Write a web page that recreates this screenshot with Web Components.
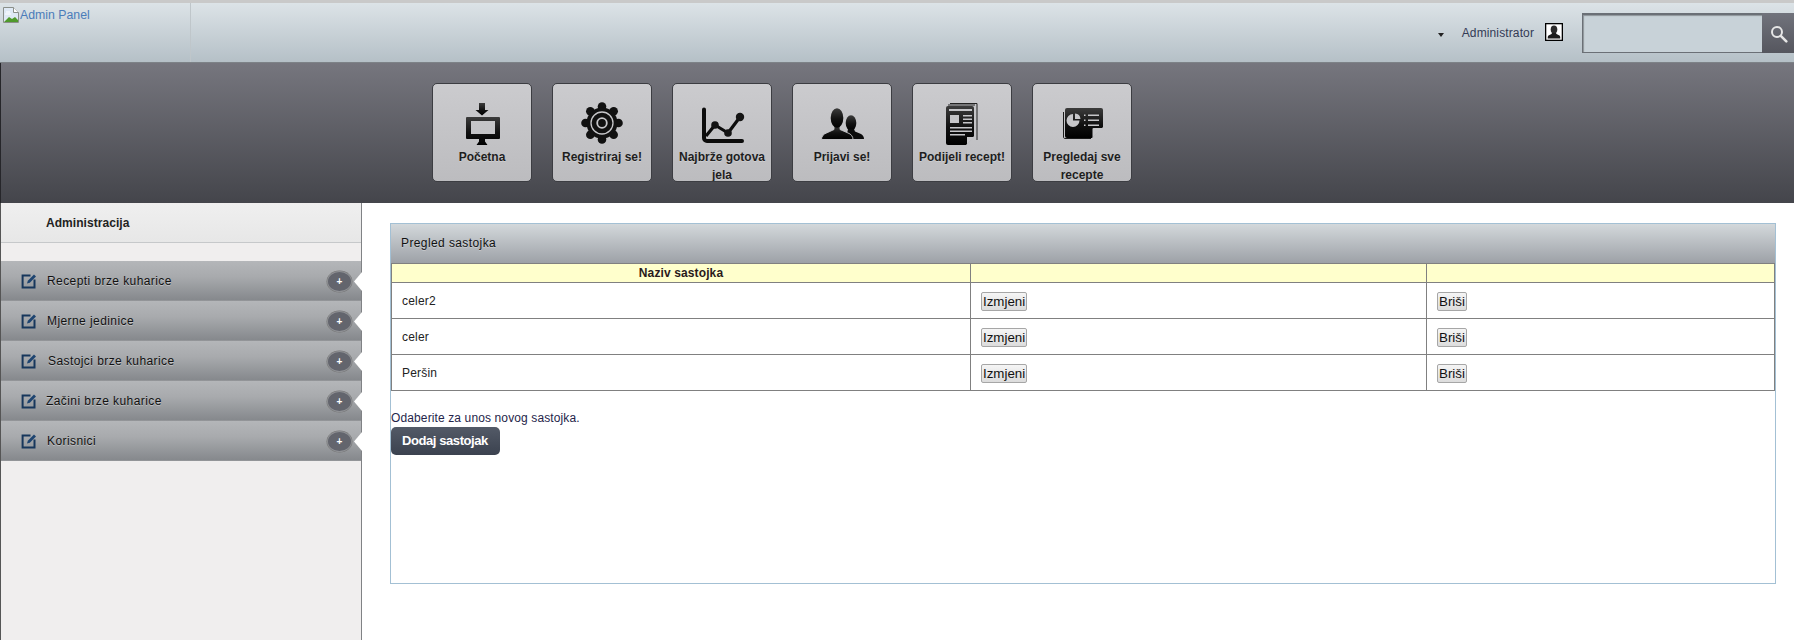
<!DOCTYPE html>
<html lang="hr">
<head>
<meta charset="utf-8">
<title>Admin Panel</title>
<style>
  html, body { margin: 0; height: 640px; overflow: hidden; background: #fff; }
  body { font: 12px "Liberation Sans", Arial, sans-serif; color: #222; display: flex; flex-direction: column; }
  main-area { flex: 1; }
</style>
</head>
<body>
  <admin-header>
    <user-menu name="Administrator"></user-menu>
    <search-box></search-box>
  </admin-header>
  <nav-bar>
    <nav-tile icon="monitor">Početna</nav-tile>
    <nav-tile icon="gear">Registriraj se!</nav-tile>
    <nav-tile icon="chart">Najbrže gotova jela</nav-tile>
    <nav-tile icon="users">Prijavi se!</nav-tile>
    <nav-tile icon="doc">Podijeli recept!</nav-tile>
    <nav-tile icon="card">Pregledaj sve recepte</nav-tile>
  </nav-bar>
  <main-area>
    <side-menu title-text="Administracija">
      <side-item>Recepti brze kuharice</side-item>
      <side-item>Mjerne jedinice</side-item>
      <side-item nudge="1">Sastojci brze kuharice</side-item>
      <side-item nudge="-1">Začini brze kuharice</side-item>
      <side-item>Korisnici</side-item>
    </side-menu>
    <data-panel heading="Pregled sastojka">
      <ingredient-table>
        <ingredient-row head name="Naziv sastojka"></ingredient-row>
        <ingredient-row name="celer2"></ingredient-row>
        <ingredient-row name="celer"></ingredient-row>
        <ingredient-row name="Peršin"></ingredient-row>
      </ingredient-table>
      <add-block hint="Odaberite za unos novog sastojka." action="Dodaj sastojak"></add-block>
    </data-panel>
  </main-area>

<script>
function shadow(el, html) {
  el.attachShadow({ mode: 'open' }).innerHTML = html;
}
const GRAD = '<defs><linearGradient id="g" x1="0" y1="0" x2="0" y2="1"><stop offset="0" stop-color="#3c3c3c"/><stop offset=".55" stop-color="#111"/><stop offset="1" stop-color="#000"/></linearGradient></defs>';
const L = '#c6c6c9';
const ICONS = {
  monitor: `<path fill="url(#g)" d="M21 1h6v7h3.500L24 13.500 17.500 8H21z"/>
    <path fill="url(#g)" fill-rule="evenodd" d="M9 15h32a1 1 0 0 1 1 1v20a1 1 0 0 1-1 1H27v2.500l2.500 3.500h-11l2.500-3.500V37H9a1 1 0 0 1-1-1V16a1 1 0 0 1 1-1zM13 19v13h24V19z"/>`,
  gear: (() => {
    let teeth = '';
    for (let i = 0; i < 8; i++) {
      const a = (i * 45) * Math.PI / 180;
      teeth += `<circle cx="${(24 + 16.5 * Math.cos(a)).toFixed(2)}" cy="${(21 + 16.5 * Math.sin(a)).toFixed(2)}" r="4.300"/>`;
    }
    return `<g fill="#111">${teeth}<circle cx="24" cy="21" r="15.500"/></g>
      <circle cx="24" cy="21" r="11" fill="none" stroke="${L}" stroke-width="1.300"/>
      <circle cx="24" cy="21" r="4.800" fill="none" stroke="${L}" stroke-width="1.800"/>`;
  })(),
  chart: `<path fill="none" stroke="#0c0c0c" stroke-width="4" stroke-linecap="round" stroke-linejoin="round" d="M6 7.500V36a3 3 0 0 0 3 3h35"/>
    <path fill="none" stroke="#0c0c0c" stroke-width="3.200" stroke-linejoin="round" d="M8 34l9-11 13 8 12-16"/>
    <g fill="#141414"><circle cx="17" cy="23" r="3.800"/><circle cx="30" cy="31" r="3.800"/><circle cx="42" cy="15" r="4.200"/></g>`,
  users: `<ellipse cx="33" cy="21" rx="5.300" ry="7.800" fill="url(#g)"/>
    <path fill="#0a0a0a" d="M30 27h6l1 2.500 6 2.500c2 1 3 3 3 5H28z"/>
    <g fill="url(#g)" stroke="${L}" stroke-width=".9">
      <path d="M16 23h6v4.500l8 3.500c3 1 5 3.500 5 6.500H3.500c0-3 2-5.500 5-6.500l7.500-3.500z"/>
    </g>
    <ellipse cx="19" cy="16" rx="6.300" ry="9.800" fill="url(#g)"/>`,
  doc: `<path fill="none" stroke="#222" stroke-width="1" d="M12 1.500h27V38"/>
    <path fill="none" stroke="#222" stroke-width="1" d="M10 3h27"/>
    <path fill="url(#g)" d="M10 4h24a2 2 0 0 1 2 2v28l-8 9H10a2 2 0 0 1-2-2V6a2 2 0 0 1 2-2z"/>
    <path fill="${L}" d="M29 42.500V35h7z"/>
    <path fill="${L}" d="M11 7h23v2H11zM12 13h9v8h-9zM25 13h9v1.500h-9zM25 16.500h9V18h-9zM25 20h9v1.500h-9zM12 25h22v1.500H12zM12 28.500h22V30H12zM12 32h15v1.500H12z"/>`,
  card: `<path fill="none" stroke="#1a1a1a" stroke-width="1" d="M5.500 10v25c0 1 .5 1.500 1.500 1.500h26"/>
    <path fill="url(#g)" d="M9 6h34a2 2 0 0 1 2 2v17L34 36H9a2 2 0 0 1-2-2V8a2 2 0 0 1 2-2z"/>
    <path fill="${L}" d="M34.500 36v-9a1 1 0 0 1 1-1H45z"/>
    <path fill="${L}" d="M15 12v6.500h6.500A6.500 6.500 0 1 1 15 12z"/>
    <path fill="${L}" d="M17 11.500a6 6 0 0 1 5.500 5.500H17z"/>
    <path fill="${L}" d="M30 12.500h11V14H30zM30 17.500h11V19H30zM30 22.500h11V24H30zM26 12.500h1.500V14H26zM26 17.500h1.500V19H26zM26 22.500h1.500V24H26z"/>`
};

customElements.define('admin-header', class extends HTMLElement {
  constructor() { super(); shadow(this, `<style>
    :host { display: flex; height: 59px; border-top: 3px solid #c9c9c9; border-bottom: 1px solid #7d8287;
      background: linear-gradient(#dce3e7, #b5c0c7); align-items: stretch; padding-left: 1px; }
    .logo { width: 189px; border-right: 1px solid #bfc6ca; display: flex; align-items: flex-start; padding-top: 4px; color: #4a7cba; font-size: 12.300px; line-height: 16px; }
    .logo svg { flex: none; margin: 0 1px 0 2px; }
    .logo a { color: inherit; text-decoration: none; }
    .right { margin-left: auto; display: flex; align-items: center; }
  </style>
  <div class="logo"><svg width="16" height="16" viewBox="0 0 16 16">
    <path d="M.5.500h10l5 5v10H.5z" fill="#dfe9f5" stroke="#8a8f8a"/>
    <path d="M10.500.500v5h5" fill="#fff" stroke="#8a8f8a"/>
    <path d="M1 15l5-5 3 2 3-2 3 3v2z" fill="#4f9a2c"/>
    <path d="M3 5h4M2 7h6" stroke="#fff"/>
  </svg><a href="#">Admin Panel</a></div>
  <div class="right"><slot></slot></div>`); }
});

customElements.define('user-menu', class extends HTMLElement {
  constructor() { super(); shadow(this, `<style>
    :host { display: flex; align-items: center; color: #333a55; font-size: 12px; margin-right: 19px; }
    .caret { width: 0; height: 0; border: 3.500px solid transparent; border-top: 4px solid #222; border-bottom: 0; margin: 4px 18px 0 0; }
    .name { letter-spacing: .12px; }
    svg { margin: -2px 0 0 11px; display: block; }
  </style>
  <span class="caret"></span><span class="name"></span>
  <svg width="18" height="18" viewBox="0 0 18 18">
    <rect x=".5" y=".5" width="17" height="17" fill="#fff" stroke="#000"/>
    <rect x="1" y="1" width="16" height="16" fill="none" stroke="#000" stroke-width=".6"/>
    <ellipse cx="9" cy="6.500" rx="3.300" ry="4" fill="#2b2b2b"/>
    <path d="M7 10h4l.5 1 3 1.500c.6.4.8 1.500.8 3H2.700c0-1.500.2-2.600.8-3l3-1.500z" fill="#1c1c1c"/>
  </svg>`);
  this.shadowRoot.querySelector('.name').textContent = this.getAttribute('name'); }
});

customElements.define('search-box', class extends HTMLElement {
  constructor() { super(); shadow(this, `<style>
    :host { display: flex; width: 212px; height: 40px; margin-top: 1px; }
    .field { flex: 1; box-sizing: border-box; background: #c8d2d8; border: 1px solid #6b7076; border-top-width: 2px; border-right: 0; box-shadow: inset 1px 1px 1px #8d949a; }
    .go { width: 32px; background: linear-gradient(#71737c, #55565e); display: flex; align-items: center; justify-content: center; }
  </style>
  <div class="field" aria-label="Pretraga"></div>
  <div class="go"><svg width="18" height="18" viewBox="0 0 18 18" style="margin:2px 0 0 1px">
    <circle cx="7" cy="7" r="5" fill="none" stroke="#e6e6e6" stroke-width="2"/>
    <path d="M10.800 10.800l5.500 5.500" stroke="#e6e6e6" stroke-width="2.600" stroke-linecap="round"/>
  </svg></div>`); }
});

customElements.define('nav-bar', class extends HTMLElement {
  constructor() { super(); shadow(this, `<style>
    :host { display: flex; height: 140px; box-sizing: border-box; border-left: 1px solid #26262a; padding: 20px 0 0 431px; gap: 20px;
      background: linear-gradient(#76767e, #44454b); }
  </style><slot></slot>`); }
});

customElements.define('nav-tile', class extends HTMLElement {
  constructor() { super(); shadow(this, `<style>
    :host { display: block; width: 100px; height: 99px; box-sizing: border-box; border: 1px solid #3c3d42; border-radius: 5px;
      background: linear-gradient(#cbcbce, #bcbcbf); text-align: center; font: bold 12px/18px "Liberation Sans", Arial, sans-serif; color: #1e1e1e;
      text-shadow: 0 1px 0 rgba(255,255,255,.25); overflow: hidden; }
    svg { display: block; margin: 18px auto 2px; }
    .t { display: block; padding: 0 2px; }
  </style>
  <svg width="48" height="44" viewBox="0 0 48 44">${GRAD}${ICONS[this.getAttribute('icon')]}</svg>
  <span class="t"><slot></slot></span>`); }
});

customElements.define('main-area', class extends HTMLElement {
  constructor() { super(); shadow(this, `<style>
    :host { display: flex; min-height: 0; }
  </style><slot></slot>`); }
});

customElements.define('side-menu', class extends HTMLElement {
  constructor() { super(); shadow(this, `<style>
    :host { display: block; width: 362px; flex: none; box-sizing: border-box; border-left: 1px solid #555; border-right: 1px solid #808285; background: #f0eeee; }
    .title { height: 38px; border-bottom: 1px solid #c6c8ca; background: linear-gradient(#efefef, #e7e7e7); padding-left: 45px; font: bold 12px/38px "Liberation Sans", Arial, sans-serif; color: #222; margin: 1px 0 18px; letter-spacing: .05px; }
    .list { display: flex; flex-direction: column; }
  </style>
  <div class="title"></div><div class="list"><slot></slot></div>`);
  this.shadowRoot.querySelector('.title').textContent = this.getAttribute('title-text'); }
});

customElements.define('side-item', class extends HTMLElement {
  constructor() { super(); shadow(this, `<style>
    :host { display: flex; align-items: center; position: relative; height: 40px; box-sizing: border-box; background: linear-gradient(#b4b6b9 0, #a8aaad 40%, #86898d 97%, #9b9da0 100%); color: #111; font-size: 12px; text-shadow: 0 1px 0 rgba(255,255,255,.35); letter-spacing: .42px; }
    svg { flex: none; margin-left: 20px; display: block; }
    .t { margin-left: ${10 + (+this.getAttribute('nudge') || 0)}px; }
    .pill { margin-left: auto; margin-right: 9px; width: 25px; height: 21px; box-sizing: border-box; border-radius: 50%; background: #63656d; border: 1px solid #8e9094; box-shadow: 0 0 0 .5px #777; color: #fff; font: bold 10px/19px "Liberation Sans", Arial, sans-serif; text-align: center; text-shadow: none; letter-spacing: 0; }
    .notch { position: absolute; right: -1px; top: 11px; width: 8px; height: 19px; background: #fff; clip-path: polygon(0 50%, 100% 0, 100% 100%); }
  </style>
  <svg width="16" height="16" viewBox="0 0 16 16">
    <path d="M9.500 2.500H1.600v11.900h11.900V6.500" fill="none" stroke="#17375c" stroke-width="2"/>
    <path d="M6 10.500l.8-2.800L13 1.500l2 2-6.200 6.200z" fill="#1d4470"/>
  </svg>
  <span class="t"><slot></slot></span>
  <span class="pill">+</span><span class="notch"></span>`); }
});

customElements.define('data-panel', class extends HTMLElement {
  constructor() { super(); shadow(this, `<style>
    :host { display: block; flex: none; box-sizing: border-box; width: 1386px; height: 361px; margin: 20px 0 0 28px; border: 1px solid #a3c0d4; }
    .head { height: 39px; background: linear-gradient(#d3d8db, #9da1a7); color: #111; font: 12px/38px "Liberation Sans", Arial, sans-serif; padding-left: 10px; text-shadow: 0 1px 0 rgba(255,255,255,.3); letter-spacing: .4px; }
  </style>
  <div class="head"></div><slot></slot>`);
  this.shadowRoot.querySelector('.head').textContent = this.getAttribute('heading'); }
});

customElements.define('ingredient-table', class extends HTMLElement {
  constructor() { super(); shadow(this, `<style>
    :host { display: block; box-sizing: border-box; border: 1px solid #808080; border-bottom: 0; }
  </style><slot></slot>`); }
});

customElements.define('ingredient-row', class extends HTMLElement {
  constructor() { super();
    const head = this.hasAttribute('head');
    const name = this.getAttribute('name');
    shadow(this, `<style>
    :host { display: grid; grid-template-columns: 579px 456px 1fr; box-sizing: border-box; height: ${head ? 19 : 36}px; border-bottom: 1px solid #808080; background: ${head ? '#ffffcc' : '#fff'}; font-size: 12px; color: #222; }
    .c { box-sizing: border-box; border-right: 1px solid #808080; padding: 0 10px; display: flex; align-items: center; }
    .c:last-child { border-right: 0; }
    .h { justify-content: center; font-weight: bold; color: #2a1a1a; letter-spacing: .12px; }
    .n { letter-spacing: .2px; }
    button { font: 13.333px "Liberation Sans", Arial, sans-serif; height: 19px; padding: 0 1px; color: #111; background: linear-gradient(#f5f5f5, #dcdcdc); border: 1px solid #a6a6a6; border-radius: 2px; line-height: 15px; margin-top: 1px; }
    </style>` + (head
      ? `<div class="c h"></div><div class="c"></div><div class="c"></div>`
      : `<div class="c n"></div><div class="c"><button>Izmjeni</button></div><div class="c"><button>Briši</button></div>`));
    this.shadowRoot.querySelector('.c').textContent = name;
  }
});

customElements.define('add-block', class extends HTMLElement {
  constructor() { super(); shadow(this, `<style>
    :host { display: block; margin-top: 20px; font-size: 12px; line-height: 14px; color: #25254a; letter-spacing: .12px; }
    .go { display: inline-block; margin-top: 2px; height: 28px; width: 109px; box-sizing: border-box; border-radius: 5px; background: linear-gradient(#535a67, #3b424f); color: #fff; font: bold 13px/27px "Liberation Sans", Arial, sans-serif; padding-left: 11px; letter-spacing: -.42px; }
  </style><div class="h"></div><div class="go"></div>`);
  this.shadowRoot.querySelector('.h').textContent = this.getAttribute('hint');
  this.shadowRoot.querySelector('.go').textContent = this.getAttribute('action'); }
});
</script>
</body>
</html>
